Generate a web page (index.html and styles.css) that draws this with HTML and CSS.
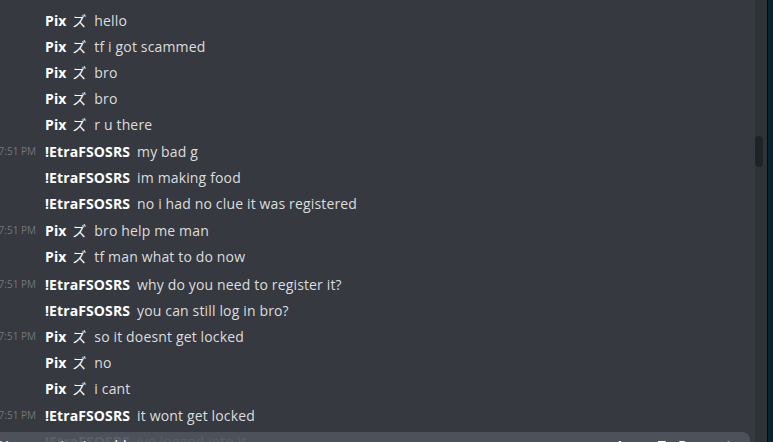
FILE: index.html
```html
<!DOCTYPE html>
<html>
<head>
<meta charset="utf-8">
<link rel="stylesheet" href="styles.css">
</head>
<body>
<div class="app">
  <div class="chat">
    <div class="messages">
      <div class="row"><span class="ts"></span><span class="name">Pix <span class="kana">ズ</span></span><span class="text">hello</span></div>
      <div class="row"><span class="ts"></span><span class="name">Pix <span class="kana">ズ</span></span><span class="text">tf i got scammed</span></div>
      <div class="row"><span class="ts"></span><span class="name">Pix <span class="kana">ズ</span></span><span class="text">bro</span></div>
      <div class="row"><span class="ts"></span><span class="name">Pix <span class="kana">ズ</span></span><span class="text">bro</span></div>
      <div class="row"><span class="ts"></span><span class="name">Pix <span class="kana">ズ</span></span><span class="text">r u there</span></div>
      <div class="row gs"><span class="ts">7:51 PM</span><span class="name">!EtraFSOSRS</span><span class="text">my bad g</span></div>
      <div class="row"><span class="ts"></span><span class="name">!EtraFSOSRS</span><span class="text">im making food</span></div>
      <div class="row"><span class="ts"></span><span class="name">!EtraFSOSRS</span><span class="text">no i had no clue it was registered</span></div>
      <div class="row gs"><span class="ts">7:51 PM</span><span class="name">Pix <span class="kana">ズ</span></span><span class="text">bro help me man</span></div>
      <div class="row"><span class="ts"></span><span class="name">Pix <span class="kana">ズ</span></span><span class="text">tf man what to do now</span></div>
      <div class="row gs2"><span class="ts">7:51 PM</span><span class="name">!EtraFSOSRS</span><span class="text">why do you need to register it?</span></div>
      <div class="row"><span class="ts"></span><span class="name">!EtraFSOSRS</span><span class="text">you can still log in bro?</span></div>
      <div class="row"><span class="ts">7:51 PM</span><span class="name">Pix <span class="kana">ズ</span></span><span class="text">so it doesnt get locked</span></div>
      <div class="row"><span class="ts"></span><span class="name">Pix <span class="kana">ズ</span></span><span class="text">no</span></div>
      <div class="row"><span class="ts"></span><span class="name">Pix <span class="kana">ズ</span></span><span class="text">i cant</span></div>
      <div class="row gs"><span class="ts">7:51 PM</span><span class="name">!EtraFSOSRS</span><span class="text">it wont get locked</span></div>
      <div class="row"><span class="ts"></span><span class="name">!EtraFSOSRS</span><span class="text">ive logged into it</span></div>
    </div>
    <div class="older">
      <span class="older-label">You are viewing older messages</span>
      <span class="jump">Jump To Present</span>
    </div>
  </div>
  <div class="scroll"><div class="thumb"></div></div>
  <div class="edge"></div>
</div>
</body>
</html>
```

FILE: styles.css
```css
html, body {
  margin: 0;
  padding: 0;
  background: #36393f;
  overflow: hidden;
}
.app {
  display: flex;
  width: 773px;
  height: 442px;
  font-family: "Open Sans", "Noto Sans CJK JP", sans-serif;
}
.chat {
  position: relative;
  flex: 1;
  overflow: hidden;
  background: #36393f;
}
.messages {
  display: flex;
  flex-direction: column;
  padding-top: 7px;
}
.row {
  display: flex;
  align-items: center;
  height: 26px;
  white-space: nowrap;
}
.gs { margin-top: 1px; }
.gs2 { margin-top: 2px; }
.ts {
  display: flex;
  justify-content: flex-end;
  width: 36px;
  margin-right: 9px;
  flex: none;
  font-size: 10px;
  color: #72767d;
  white-space: nowrap;
}
.name {
  color: #ffffff;
  font-weight: 700;
  font-size: 14px;
  margin-right: 7px;
  letter-spacing: 0.1px;
}
.kana {
  font-weight: 400;
  margin-left: 2px;
  margin-right: 1px;
}
.text {
  color: #dcddde;
  font-size: 14px;
  letter-spacing: 0.15px;
}
.older {
  position: absolute;
  left: -8px;
  top: 432px;
  width: 758px;
  height: 30px;
  background: rgba(79, 84, 92, 0.93);
  border-radius: 8px 8px 0 0;
  display: flex;
  justify-content: space-between;
  padding: 4px 0 0 8px;
  box-sizing: border-box;
  font-size: 14px;
  color: #fff;
}
.jump {
  font-weight: 700;
  margin-right: 18px;
}
.scroll {
  width: 12px;
  flex: none;
  background: #2f3237;
  position: relative;
}
.thumb {
  position: absolute;
  left: 0;
  top: 136px;
  width: 8px;
  height: 31px;
  border-radius: 4px;
  background: #202225;
}
.edge {
  width: 6px;
  flex: none;
  background: #0b2530;
  border-left: 1px solid #050a0d;
  box-sizing: border-box;
}
```
